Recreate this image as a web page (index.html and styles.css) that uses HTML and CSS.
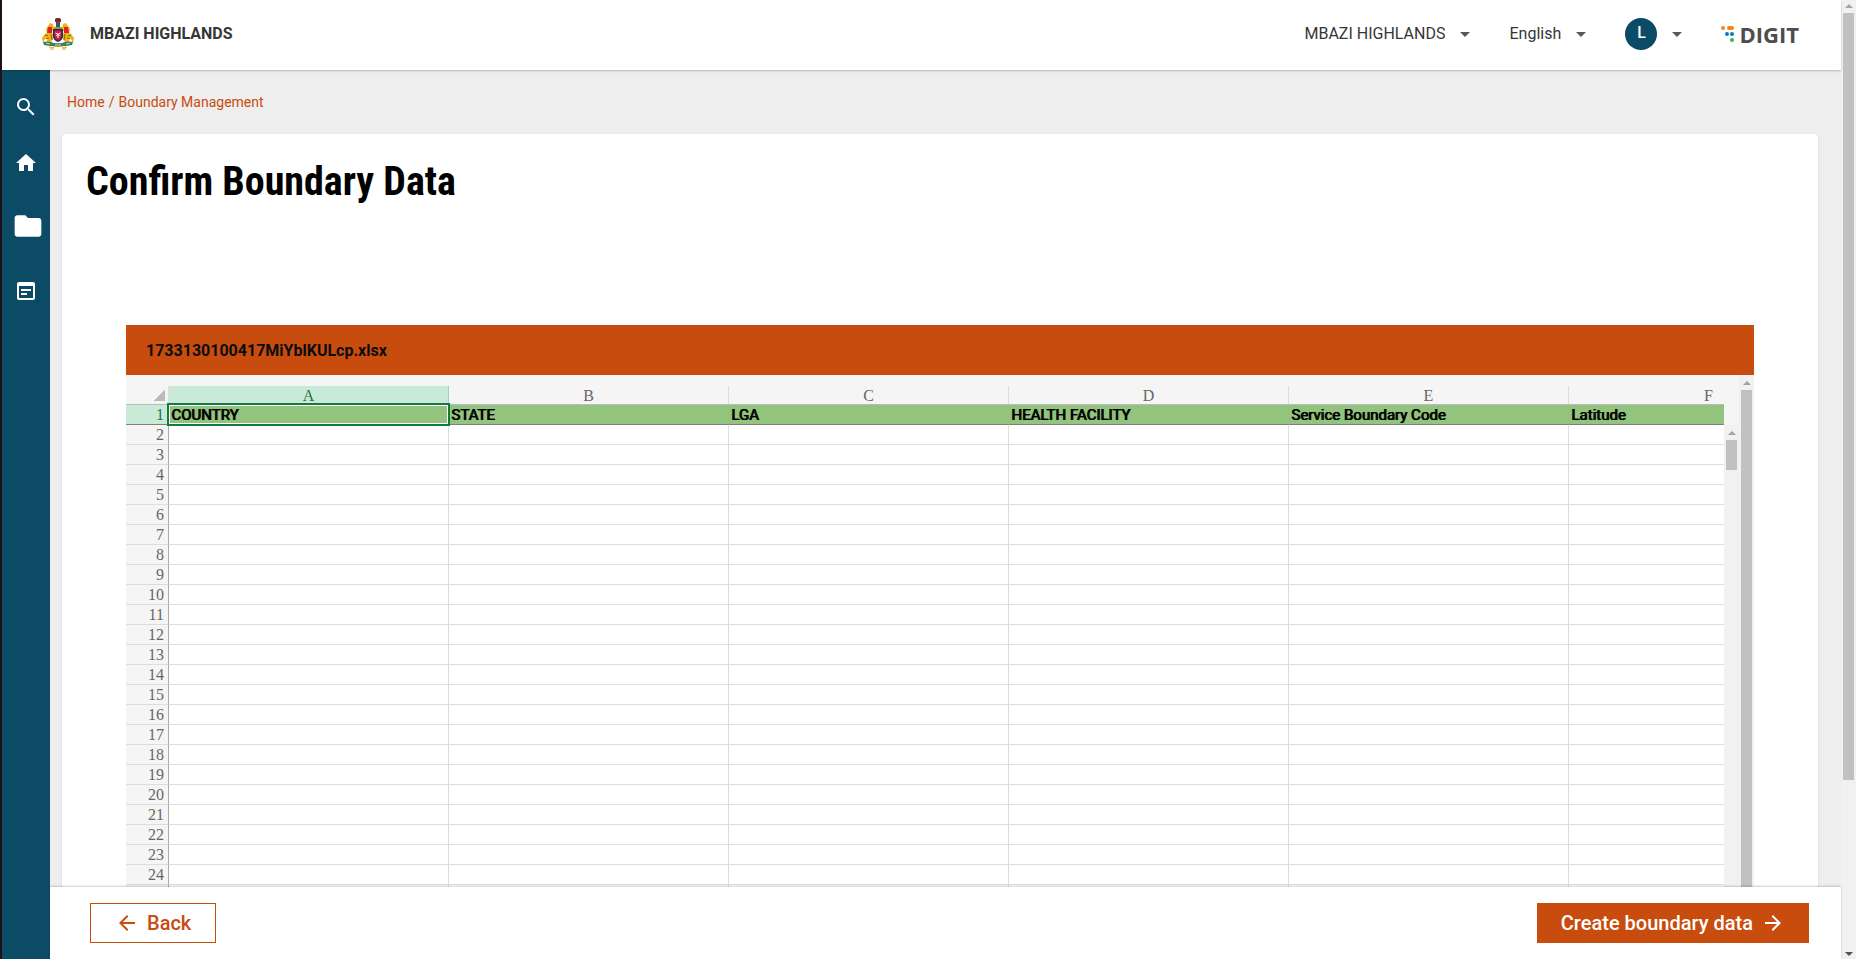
FILE: index.html
```html
<!DOCTYPE html>
<html lang="en">
<head>
    <title>Boundary Management</title>
    <meta charset="utf-8">
    <meta name="viewport" content="width=device-width, initial-scale=1">
    <link rel="stylesheet" href="styles.css">
</head>
<body>
<div class="app">
    <header class="header">
        <div class="brand">
            <svg class="emblem" viewBox="0 0 32 32" aria-hidden="true">
                <path d="M13 1l1.500-1h3L19 1v3h-6z" fill="#7a2b1e"/>
                <path d="M14 4h4v6h-4z" fill="#2f5d68"/>
                <path d="M12 9h8v2h-8z" fill="#b98a2c"/>
                <path d="M8 5l3 1 1 4-2 4 2 5-3 5-5 1 2-5-3 1-2 4-1-5 3-4 2-1-1-4z" fill="#eeb211"/>
                <path d="M24 5l-3 1-1 4 2 4-2 5 3 5 5 1-2-5 3 1 2 4 1-5-3-4-2-1 1-4z" fill="#eeb211"/>
                <path d="M6 9h4v6H5zM22 9h4l1 6h-5z" fill="#e3201b"/>
                <path d="M3 17l3 1M4 21l3-1M29 17l-3 1M28 21l-3-1M9 16l1 6M23 16l-1 6" stroke="#8a6410"/>
                <path d="M11 11h10v7q0 4-5 6-5-2-5-6z" fill="#1d2c6b"/>
                <path d="M12.500 12.500h7v5q0 3-3.500 5-3.500-2-3.500-5z" fill="#d5203a"/>
                <path d="M13.500 15l2 1h1l2-1M14.500 18l1.500-2 1.500 2M16 16v4" stroke="#fff" fill="none"/>
                <path d="M1 24q4-1 8 0 4 2 7 1 3 1 7-1 4-1 8 0l-1 3-6 1q-4 0-8 1-4-1-8-1l-6-1z" fill="#3b7d62"/>
                <path d="M4 25l4 1M24 26l4-1M13 27h6" stroke="#c8d7b6"/>
                <path d="M7 29l4 1 2-2h6l2 2 4-1M8 31h4M20 31h4" stroke="#e6a917" fill="none"/>
            </svg>
            <span class="brand-name">MBAZI HIGHLANDS</span>
        </div>
        <div class="header-actions">
            <label class="dropdown">
                <select class="select" name="city" aria-label="City">
                    <option selected>MBAZI HIGHLANDS</option>
                </select>
                <svg class="icon caret" viewBox="0 0 24 24"><path d="M7 10l5 5 5-5z"/></svg>
            </label>
            <label class="dropdown">
                <select class="select" name="language" aria-label="Language">
                    <option selected>English</option>
                </select>
                <svg class="icon caret" viewBox="0 0 24 24"><path d="M7 10l5 5 5-5z"/></svg>
            </label>
            <button class="profile" type="button" aria-label="Profile">
                <span class="avatar">L</span>
                <svg class="icon caret" viewBox="0 0 24 24"><path d="M7 10l5 5 5-5z"/></svg>
            </button>
            <div class="digit">
                <svg class="digit-dots" viewBox="0 0 14 18" aria-hidden="true">
                    <circle cx="2" cy="3" r="2" fill="#f58220"/>
                    <rect x="6" y="1" width="7" height="4" rx="2" fill="#f58220"/>
                    <circle cx="6" cy="9" r="2" fill="#0b7bc1"/>
                    <circle cx="11" cy="9" r="2" fill="#0b7bc1"/>
                    <circle cx="11" cy="15" r="2" fill="#2fb457"/>
                </svg>
                <span>DIGIT</span>
            </div>
        </div>
    </header>
    <div class="layout">
        <nav class="sidebar">
            <a href="#search" aria-label="Search">
                <svg class="icon" viewBox="0 0 24 24"><path d="M15.500 14h-.79l-.28-.27A6.470 6.470 0 0 0 16 9.500 6.500 6.500 0 1 0 9.500 16c1.610 0 3.090-.59 4.230-1.570l.27.28v.79l5 4.990L20.490 19l-4.990-5zm-6 0C7.010 14 5 11.990 5 9.500S7.010 5 9.500 5 14 7.010 14 9.500 11.990 14 9.500 14z"/></svg>
            </a>
            <a href="#home" aria-label="Home">
                <svg class="icon" viewBox="0 0 24 24"><path d="M10 20v-6h4v6h5v-8h3L12 3 2 12h3v8z"/></svg>
            </a>
            <a class="sidebar-large" href="#campaigns" aria-label="Campaigns">
                <svg class="icon icon-large" viewBox="0 0 24 24"><path d="M10 4H4c-1.100 0-2 .9-2 2v12c0 1.100.9 2 2 2h16c1.100 0 2-.9 2-2V8c0-1.100-.9-2-2-2h-8l-2-2z"/></svg>
            </a>
            <a href="#boundaries" aria-label="Boundaries">
                <svg class="icon" viewBox="0 0 24 24"><path d="M19 3H5a2 2 0 0 0-2 2v14c0 1.100.9 2 2 2h14c1.100 0 2-.9 2-2V5a2 2 0 0 0-2-2zm0 16H5V7h14v12zM17 12H7v-2h10v2zm-4 4H7v-2h6v2z"/></svg>
            </a>
        </nav>
        <div class="main">
            <main class="content">
                <nav class="breadcrumb">
                    <a href="#home">Home</a><span>/</span><a href="#boundaries">Boundary Management</a>
                </nav>
                <section class="card">
                    <h1 class="title">Confirm Boundary Data</h1>
                    <div class="viewer">
                        <div class="viewer-name">1733130100417MiYblKULcp.xlsx</div>
                        <div class="viewer-body">
                            <div class="sheet-wrapper">
                                <table class="sheet">
                                    <colgroup>
                                        <col class="col-index">
                                        <col><col><col><col><col><col>
                                    </colgroup>
                                    <thead>
                                        <tr>
                                            <th class="corner"></th>
                                            <th class="active">A</th>
                                            <th>B</th>
                                            <th>C</th>
                                            <th>D</th>
                                            <th>E</th>
                                            <th>F</th>
                                        </tr>
                                    </thead>
                                    <tbody id="rows">
                                        <tr class="row-titles">
                                            <th class="active">1</th>
                                            <td class="selected">COUNTRY</td>
                                            <td>STATE</td>
                                            <td>LGA</td>
                                            <td>HEALTH FACILITY</td>
                                            <td>Service Boundary Code</td>
                                            <td>Latitude</td>
                                        </tr>
                                    </tbody>
                                </table>
                            </div>
                            <div class="scroll scroll-rows">
                                <span class="scroll-up"></span>
                                <span class="scroll-thumb"></span>
                            </div>
                            <div class="scroll">
                                <span class="scroll-up"></span>
                                <span class="scroll-thumb"></span>
                            </div>
                        </div>
                    </div>
                </section>
            </main>
            <footer class="action-bar">
                <button class="button button-outline" type="button">
                    <svg class="icon" viewBox="0 0 24 24"><path d="M20 11H7.830l5.590-5.590L12 4l-8 8 8 8 1.410-1.410L7.830 13H20v-2z"/></svg>
                    Back
                </button>
                <button class="button" type="button">
                    Create boundary data
                    <svg class="icon" viewBox="0 0 24 24"><path d="M12 4l-1.410 1.410L16.170 11H4v2h12.170l-5.580 5.590L12 20l8-8z"/></svg>
                </button>
            </footer>
        </div>
    </div>
</div>
<div class="scroll scroll-page">
    <span class="scroll-up"></span>
    <span class="scroll-thumb"></span>
    <span class="scroll-down"></span>
</div>
<script>
    // Empty rows under the column titles
    const rows = document.getElementById('rows')
    const lastRow = 24

    function addRow(title) {
        const row = rows.insertRow()
        const index = document.createElement('th')
        index.textContent = title
        row.append(index)
        for (let j = 0; j < 6; j++) row.insertCell()
    }

    for (let i = 2; i <= lastRow; i++) addRow(i)

    // spare row at the bottom edge
    addRow('')
</script>
</body>
</html>
```

FILE: styles.css
```css
*, *::before, *::after {
    margin: 0;
    padding: 0;
    box-sizing: border-box;
}

body {
    height: 100vh;
    display: flex;
    overflow: hidden;
    border-left: 2px solid #1c1218;
    background-color: #eeeeee;
    color: #363636;
    font-family: "Roboto", sans-serif;
    font-size: 16px;
}

a {
    color: inherit;
    text-decoration: none;
}

button, select {
    border: none;
    background-color: transparent;
    color: inherit;
    font: inherit;
    cursor: pointer;
}

.app {
    flex: 1;
    min-width: 0;
    display: flex;
    flex-direction: column;
}

.icon {
    display: block;
    width: 24px;
    height: 24px;
    fill: currentColor;
}

.icon-large {
    width: 32px;
    height: 32px;
}

/* Header */
.header {
    position: relative;
    z-index: 1;
    display: flex;
    align-items: center;
    justify-content: space-between;
    padding: 18px 42px 20px 40px;
    background-color: #ffffff;
    box-shadow: 0 1px 2px rgba(0, 0, 0, 0.24);
}

.brand {
    display: flex;
    align-items: center;
    gap: 16px;
}

.emblem {
    width: 32px;
    height: 32px;
}

.brand-name, .select {
    padding-bottom: 2px;
}

.brand-name {
    font-weight: 700;
}

.header-actions {
    display: flex;
    align-items: center;
    gap: 32px;
}

.dropdown, .profile {
    display: flex;
    align-items: center;
    gap: 8px;
}

.select {
    -webkit-appearance: none;
    appearance: none;
}

.caret {
    color: #505a5f;
}

.avatar {
    width: 32px;
    height: 32px;
    border-radius: 50%;
    padding-bottom: 2px;
    background-color: #0b4b66;
    color: #ffffff;
    font-weight: 500;
    line-height: 30px;
}

.digit {
    display: flex;
    align-items: center;
    gap: 4px;
    color: #4d4d4f;
    font-family: "Open Sans", sans-serif;
    font-size: 22px;
    font-weight: 700;
    line-height: 32px;
}

.digit-dots {
    width: 14px;
    height: 18px;
}

/* Sidebar */
.layout {
    flex: 1;
    min-height: 0;
    display: flex;
}

.sidebar {
    width: 48px;
    display: flex;
    flex-direction: column;
    align-items: center;
    gap: 32px;
    padding-top: 25px;
    background-color: #0b4b66;
    color: #ffffff;
}

.sidebar-large {
    margin: 3px 0 5px 4px;
}

.main {
    flex: 1;
    min-width: 0;
    display: flex;
    flex-direction: column;
}

.content {
    flex: 1;
    min-height: 0;
    overflow: hidden;
    padding: 24px 23px 0 12px;
}

.breadcrumb {
    display: flex;
    gap: 4px;
    margin-bottom: 24px;
    padding-left: 5px;
    color: #c84c0e;
    font-size: 14px;
    line-height: 16px;
}

.card {
    border-radius: 4px;
    padding: 24px;
    background-color: #ffffff;
    box-shadow: 0 1px 2px rgba(0, 0, 0, 0.16);
}

.title {
    margin-bottom: 119px;
    color: #000000;
    font-family: "Roboto Condensed", "Roboto", sans-serif;
    font-size: 40px;
    font-weight: 700;
    line-height: 48px;
}

/* Spreadsheet */
.viewer {
    margin: 0 40px;
}

.viewer-name {
    padding: 2px 20px 0;
    background-color: #c84c0e;
    color: #0b0c0c;
    font-weight: 700;
    line-height: 48px;
}

.viewer-body {
    display: flex;
    background-color: #f5f5f5;
}

.sheet-wrapper {
    flex: 1;
    min-width: 0;
    overflow: hidden;
    padding-top: 11px;
}

.sheet {
    width: 1723px;
    table-layout: fixed;
    border-spacing: 0;
    color: #000000;
    font-size: 15px;
}

.col-index {
    width: 43px;
}

.sheet th {
    height: 20px;
    border-bottom: 1px solid #dddddd;
    padding-top: 1px;
    background-color: #f5f5f5;
    color: #666666;
    font-family: "Liberation Serif", serif;
    font-size: 16px;
    font-weight: 400;
    line-height: 18px;
}

.sheet thead th {
    height: 19px;
    border-right: 1px solid #dddddd;
    border-bottom-color: #bbbbbb;
    line-height: 17px;
}

.sheet tbody th {
    border-right: 1px solid #aaaaaa;
    padding-right: 4px;
    text-align: right;
}

.sheet .active {
    background-color: #caead8;
    color: #217346;
}

.sheet thead .active {
    border-right-color: #9fd5b7;
}

.sheet .corner {
    background-image: linear-gradient(135deg, transparent 50%, #bbbbbb 50%);
    background-position: 27px 3px;
    background-repeat: no-repeat;
    background-size: 12px 12px;
}

.sheet td {
    height: 20px;
    border-right: 1px solid #dddddd;
    border-bottom: 1px solid #dddddd;
    padding-left: 2px;
    background-color: #ffffff;
    line-height: 18px;
}

.sheet .row-titles td {
    border-right-color: #93c47d;
    border-bottom-color: #808080;
    background-color: #93c47d;
    text-shadow: 1px 0 0 #000000;
}

.sheet .row-titles th {
    border-bottom-color: #808080;
}

.sheet .selected {
    position: relative;
}

.selected::after {
    content: "";
    position: absolute;
    inset: -2px -2px -2px -2px;
    border: 2px solid #107c41;
    box-shadow: inset 0 0 0 1px #ffffff;
}

/* Scrollbars */
.scroll {
    width: 15px;
    display: flex;
    flex-direction: column;
    align-items: center;
    background-color: #f1f1f1;
}

.scroll-up, .scroll-down {
    height: 15px;
    padding-top: 6px;
}

.scroll-up::before, .scroll-down::before {
    content: "";
    display: block;
    border: 4px solid transparent;
    border-top-width: 0;
    border-bottom-color: #a3a3a3;
}

.scroll-down::before {
    border-top: 4px solid #505050;
    border-bottom: none;
}

.scroll-thumb {
    flex: 1;
    width: 11px;
    background-color: #c1c1c1;
}

.scroll-rows {
    margin-top: 50px;
}

.scroll-rows .scroll-thumb {
    flex: 0 0 30px;
}

.scroll-page .scroll-up {
    height: 13px;
    padding-top: 4px;
}

.scroll-page .scroll-thumb {
    flex: 0 0 80%;
    margin-bottom: auto;
}

.scroll-page .scroll-down {
    height: 13px;
}

/* Bottom actions */
.action-bar {
    position: relative;
    display: flex;
    align-items: center;
    justify-content: space-between;
    padding: 16px 32px 16px 40px;
    background-color: #ffffff;
    box-shadow: 0 -1px 2px rgba(0, 0, 0, 0.2);
}

.button {
    height: 40px;
    display: flex;
    align-items: center;
    gap: 8px;
    padding: 0 24px;
    background-color: #c84c0e;
    color: #ffffff;
    font-size: 20px;
    font-weight: 500;
}

.button-outline {
    border: 1px solid #c84c0e;
    background-color: #ffffff;
    color: #c84c0e;
}

.button:hover {
    opacity: 0.9;
}
```
